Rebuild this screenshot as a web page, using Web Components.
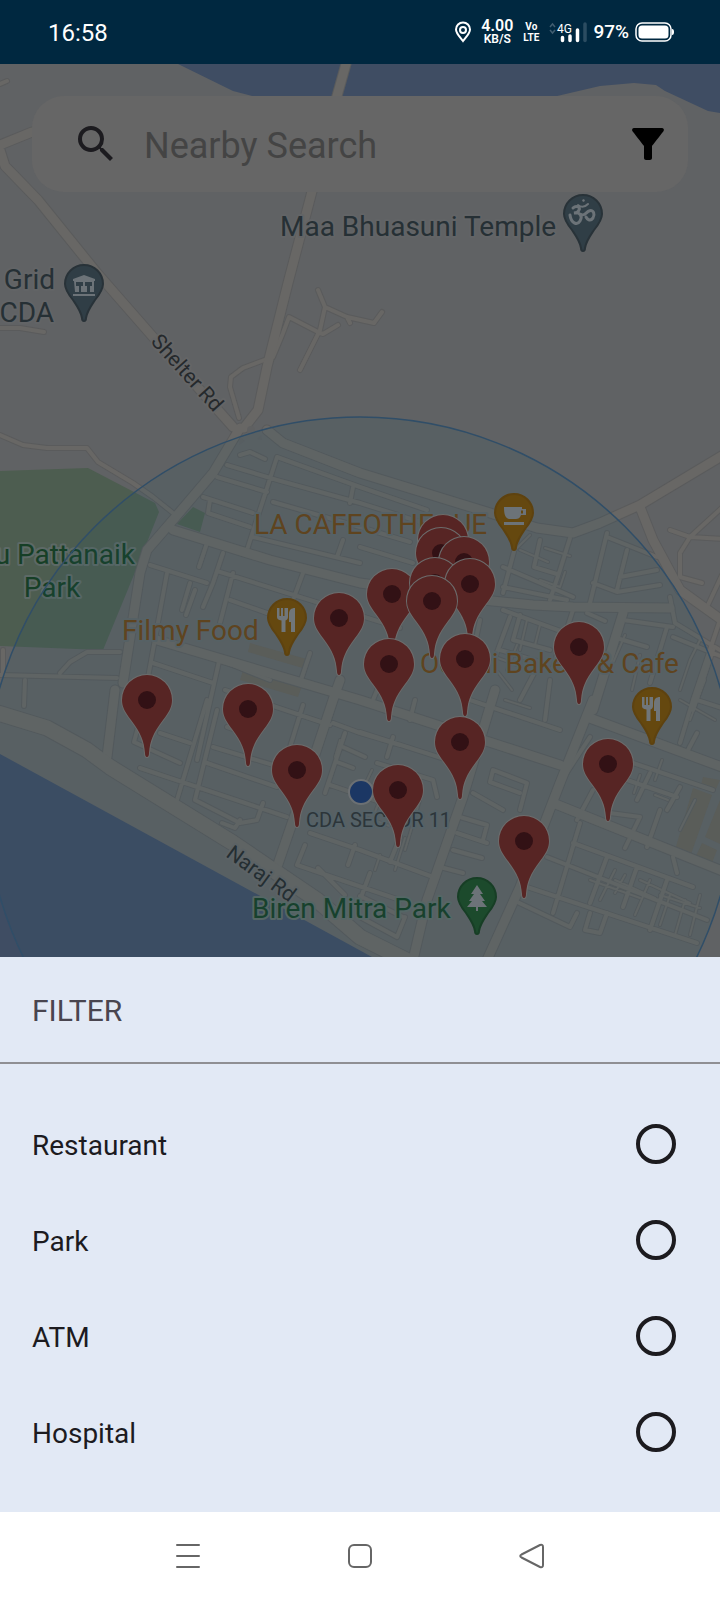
<!DOCTYPE html>
<html lang="en">
<head>
<meta charset="utf-8">
<meta name="viewport" content="width=device-width, initial-scale=1">
<title>Nearby Search</title>
<style>
html, body { margin: 0; height: 100%; }
body { font-family: Roboto, "Noto Sans", sans-serif; background: #fff; }
</style>
</head>
<body>
<nearby-app></nearby-app>

<script>
const define = (name, html, setup) => {
  const template = document.createElement('template');
  template.innerHTML = html;
  customElements.define(name, class extends HTMLElement {
    constructor() {
      super();
      this.attachShadow({ mode: 'open' }).append(template.content.cloneNode(true));
    }
    connectedCallback() { if (setup) setup(this.shadowRoot, this); }
  });
};

define('status-bar', `
<style>
:host { display: flex; align-items: center; justify-content: space-between; box-sizing: border-box; height: 64px; padding: 0 46px 0 48px; background: #002840; color: #fff; }
time { padding-top: 2px; font-size: 24px; line-height: 32px; }
.icons { display: flex; align-items: center; }
.icons svg { display: block; flex: none; }
.stack { display: flex; flex-direction: column; align-items: center; font-weight: 600; }
.rate { margin-left: 9px; font-size: 16px; line-height: 14px; }
.rate small { font-size: 12px; line-height: 12px; }
.volte { margin-left: 10px; font-size: 10px; line-height: 11px; font-weight: 700; }
.signal { margin-left: 9px; }
.signal text { font: 400 12px Roboto, sans-serif; fill: #fff; }
.charge { margin: 0 6px 0 5px; font-size: 19px; line-height: 24px; font-weight: 500; }
</style>
<time>16:58</time>
<div class="icons">
  <svg width="18" height="22" viewBox="0 0 18 22" fill="none" stroke="#fff" stroke-width="2"><path d="M9 20C6 16 2 12.500 2 8.500A7 7 0 0 1 16 8.500C16 12.500 12 16 9 20Z"/><circle cx="9" cy="9" r="3"/></svg>
  <div class="stack rate"><span>4.00</span><small>KB/S</small></div>
  <div class="stack volte"><span>Vo</span><span>LTE</span></div>
  <svg class="signal" width="40" height="22" viewBox="0 0 40 22"><path d="M2 6l2.500-3 2.500 3M2 9l2.500 3 2.500-3" fill="none" stroke="#405d70" stroke-width="1.500"/><text x="9" y="12">4G</text><path d="M14.500 16.500v3M22 15v4.500M29.500 9v10.500" stroke="#fff" stroke-width="3.500" stroke-linecap="round"/><path d="M37 3v16.500" stroke="#2b4c61" stroke-width="3.500" stroke-linecap="round"/></svg>
  <span class="charge">97%</span>
  <svg width="39" height="22" viewBox="0 0 39 22"><rect x="1" y="2" width="35" height="18" rx="6" fill="none" stroke="#fff" stroke-width="1.500"/><rect x="3.500" y="4.500" width="30" height="13" rx="3.500" fill="#fff"/><path d="M37 8c1.500 0 2 1 2 3s-.5 3-2 3z" fill="#fff"/></svg>
</div>`);

define('search-bar', `
<style>
:host { display: flex; align-items: center; box-sizing: border-box; height: 96px; padding: 0 16px 0 40px; background: #666; border-radius: 32px; }
svg { display: block; }
input { flex: 1; min-width: 0; margin: 0 0 0 24px; padding: 4px 0 0; border: 0; outline: 0; background: none; color: #222; font: 36px/44px Roboto, sans-serif; }
input::placeholder { color: #444; opacity: 1; }
button { padding: 0; border: 0; background: none; }
</style>
<svg width="48" height="48" viewBox="0 0 24 24" fill="#1c1b1f" aria-hidden="true"><path d="M15.500 14h-.79l-.28-.27A6.471 6.471 0 0 0 16 9.500 6.500 6.500 0 1 0 9.500 16c1.610 0 3.090-.59 4.230-1.570l.27.28v.79l5 4.990L20.490 19l-4.990-5zm-6 0C7.010 14 5 11.990 5 9.500S7.010 5 9.500 5 14 7.010 14 9.500 11.990 14 9.500 14z"/></svg>
<input type="search" placeholder="Nearby Search" aria-label="Nearby Search">
<button type="button" aria-label="Filter"><svg width="48" height="48" viewBox="0 0 24 24"><path d="M4.250 5.610C6.270 8.200 10 13 10 13v6c0 .55.45 1 1 1h2c.55 0 1-.45 1-1v-6s3.720-4.800 5.740-7.390A.998.998 0 0 0 18.950 4H5.040c-.83 0-1.300.95-.79 1.610z"/></svg></button>`);

define('area-map', `
<style>
:host { display: block; position: relative; overflow: hidden; background: #606264; }
.canvas { position: absolute; inset: 0; width: 100%; height: 100%; display: block; }
text { font-family: Roboto, "Noto Sans", sans-serif; font-size: 28px; paint-order: stroke; stroke-linejoin: round; stroke-width: 4px; }
.place { fill: #263035; stroke: #626466; }
.food { fill: #684216; stroke: #5e6466; }
.park { fill: #163f26; stroke: #5d6966; }
.road { fill: #25292c; stroke: #646566; font-size: 21px; }
.area { fill: #2e3235; stroke: #5c6468; font-size: 20px; }
.casing, .surface { fill: none; stroke-linejoin: round; stroke-linecap: round; }
.casing { stroke: #5a5b5c; }
.surface { stroke: #686765; }
</style>
<svg class="canvas" viewBox="0 64 720 893" preserveAspectRatio="xMidYMin slice" role="img" aria-label="Map of nearby places">
  <defs>
    <g id="pin"><path d="M0 82C-1.500 82-2 80-2 78C-3 66-6 58-16 45C-22 37-25 32-25 25A25 25 0 0 1 25 25C25 32 22 37 16 45C6 58 3 66 2 78C2 80 1.500 82 0 82Z" fill="#572524" stroke="#6c6c6c" stroke-width="2" paint-order="stroke"/><circle cy="25" r="9" fill="#321115"/></g>
    <path id="poi" d="M0 57C-1.500 57-2 55-2 54C-3 47-7 42-11 36C-15 31-19 26-19 20A19 19 0 0 1 19 20C19 26 15 31 11 36C7 42 3 47 2 54C2 55 1.500 57 0 57Z" stroke-width="2"/>
    <g id="cutlery" fill="#70767a"><path d="M-10 10h2.500v8h1.500v-8h2v8h1.500v-8H1v9c0 2-1 3-2.500 3.500V34h-4V22.500C-9 22-10 21-10 19Z"/><path d="M8 10V34H4V24H2V16C2 12 4 10 8 10Z"/></g>
    <path id="avenue" d="M-10 142L0 150M0 145L32 132M0 150L5 166L38 200L97 273L153 337L233 427M346 64L337 96L288 283L267 367L258 410L244 428M240 428L213 473L173 520L147 550L140 573L123 683M267 430L283 443L360 473L487 512L537 528L573 533L600 523L640 505L730 451M640 507L653 540L680 590L730 626M173 530L270 560L360 583L483 600L533 605L573 607L670 608M157 640L360 700L560 765M593 700L560 783L520 887L487 960M623 613L593 710M587 717L730 770M553 803L730 874M495 690L463 797L427 900L413 960M340 680L333 700L300 800L277 867M115 690L107 757"/>
    <path id="riverside" d="M-5 712L47 728L87 750L110 767L233 843L317 900L360 937L410 962"/>
    <path id="lane" d="M0 84L7 81M267 359L243 368L231 377L230 387L239 418M273 357L283 333L289 317L320 333L323 334L338 325M318 290L325 307L320 330L300 370M325 307L347 317L374 323L382 312M347 317L350 323M0 328L20 328L44 332M0 435L23 445L47 448L87 448L98 462L133 483L153 497L173 513M277 457L360 487L427 510M277 457L247 550M217 477L267 492M203 497L253 513M227 465L277 480L360 503L430 525M273 502L360 527L410 542M253 537L360 563M210 500L208 513L250 527M207 543L199 567M223 553L213 583L203 607M150 565L207 583M167 573L147 683M190 583L182 610M217 571L300 597L400 628M233 573L220 623M303 573L293 600M230 600L267 613M353 487L350 503M343 540L337 557M153 663L213 683M220 657L197 760M220 660L270 680M310 653L300 683M195 590L186 615M240 455L250 452L265 459M60 673L70 662L87 652L120 652M0 675L117 678M25 680L24 706M3 650V675M670 530L690 537L725 539M725 505L690 537L680 553V577L702 583M722 575L707 607M503 567L573 597M360 547L413 563M503 587L567 600M517 540L503 593M540 540L534 567L557 574M570 538L560 570L550 600M607 533L590 603M607 537L657 557M627 550L617 590M593 583L617 592L660 585M620 577L657 570M503 610L577 637M573 610L560 650M587 613L605 621M623 620L673 627M613 637L647 647M510 617L493 663M667 627L650 683M673 637L730 660M713 650L693 710M670 597L675 623L720 650M393 737L387 757M360 732L457 763M377 763L433 780L437 797M520 810L527 783L493 770L490 782L520 793M473 793L503 810M460 817L487 825L483 840M457 833L487 843M453 850L482 858M360 850L433 877M370 873L360 900M360 896L403 917M360 917L397 937L405 917M440 867L463 873M573 843L693 887M547 857L707 920M527 887L697 943M513 900L570 927L577 913M580 823L553 913M607 857L590 903M637 867L623 907M667 880L650 930M590 913L585 930L600 933L607 913M633 763L713 790M650 773L637 800M680 787L667 810M627 780L677 797M610 813L640 817L625 848M660 810L647 847M673 857L677 873M680 743L693 700L720 620M697 700L725 709M697 733L688 750M590 737L560 783M593 790L577 820M207 700L177 800M160 733L190 743M140 720L134 742L180 763M140 768L287 817M217 710L195 800L240 823L257 820L263 803M222 823L235 828L240 820M207 763L277 787M213 747L280 767M227 727L250 735M303 705L290 747M225 690L330 725M333 723L360 733L400 745M345 733L325 793M343 747L365 757M337 762L353 768M330 785L380 802M310 833L360 850M305 845L297 865L400 900M318 868L345 895M355 845L348 865M400 837L390 862M415 700L410 720M380 683L373 700M480 620L465 690M500 650L540 662L520 700M520 615L513 640L550 650M550 680L545 720M470 700L560 730"/>
    <path id="alley" d="M513 552L530 535M520 550L548 562M545 548L570 556M540 580L560 587L565 572M517 645L507 670M495 657L520 666M527 620L520 650M540 625L535 645M498 672L512 690M505 700L530 708M560 640L552 668M625 635L613 663M640 655L632 690M690 660L680 690M660 650L655 672M705 680L690 720M340 740L335 757M372 770L360 795M388 780L375 812M400 785L393 815M360 815L395 828M405 838L395 870M420 800L405 850M380 855L375 870M615 870L600 900M625 875L615 893M650 880L635 915M670 895L660 925M685 900L675 935M590 880L640 898M615 880L655 898M640 880L690 903M660 895L700 908M700 895L690 935M640 775L634 793M662 760L655 780M655 795L668 800M695 800L680 830M700 640L690 660M680 700L715 720"/>
  </defs>
  <path fill="#3f4d63" d="M178 64L233 91L275 102L540 100L600 86L634 83L656 85L665 91L708 111L720 113V64ZM0 754L372 957H0Z"/>
  <path fill="#4d5d50" d="M0 471L88 468L155 503L159 512L140 560L103 650L0 646ZM193 507L205 513L200 532L177 524Z"/>
  <path fill="#625f58" d="M250 643L310 660L306 669L248 652ZM245 664L303 683L298 697L240 680ZM693 788L712 795L690 857L675 850ZM703 777L720 780L716 789L701 785ZM720 800V844L705 837ZM702 843L717 850L712 863L695 858Z"/>
  <g class="casing">
    <use href="#alley" stroke-width="4"/><use href="#lane" stroke-width="6"/><use href="#avenue" stroke-width="11"/><use href="#riverside" stroke-width="17"/>
  </g>
  <g class="surface">
    <use href="#alley" stroke-width="2"/><use href="#lane" stroke-width="4"/><use href="#avenue" stroke-width="9"/><use href="#riverside" stroke-width="15"/>
  </g>
  <g fill="#5f6061"><circle cx="251" cy="430" r="4"/><path d="M257 439l5 1l-1-5zM240 437l5 4l-6 4z"/></g>

  <text class="place" x="280" y="236">Maa Bhuasuni Temple</text>
  <text class="place" x="55" y="289" text-anchor="end">Grid</text>
  <text class="place" x="54" y="322" text-anchor="end">CDA</text>
  <text class="road" transform="translate(150 342) rotate(48)">Shelter Rd</text>
  <text class="road" transform="translate(225 856) rotate(36)">Naraj Rd</text>
  <text class="park" x="135" y="564" text-anchor="end">u Pattanaik</text>
  <text class="park" x="52" y="597" text-anchor="middle">Park</text>
  <text class="food" x="254" y="534">LA CAFEOTHEQUE</text>
  <text class="food" x="122" y="640">Filmy Food</text>
  <text class="food" x="420" y="673">Odishi Bakery &amp; Cafe</text>
  <text class="area" x="306" y="827">CDA SECTOR 11</text>
  <text class="park" x="252" y="918">Biren Mitra Park</text>
  <circle cx="360" cy="792" r="375" fill="#1e5564" fill-opacity=".12" stroke="#304e68" stroke-width="1.500"/>

  <g fill="#303e46" stroke="#283238">
    <use href="#poi" x="84" y="264"/><use href="#poi" x="583" y="194"/>
  </g>
  <g fill="#65480f" stroke="#5e420f">
    <use href="#poi" x="514" y="493"/><use href="#poi" x="287" y="598"/><use href="#poi" x="652" y="687"/>
  </g>
  <use href="#poi" x="477" y="877" fill="#1c4a2c" stroke="#173e25"/>
  <g fill="#6c7378">
    <path d="M73 281V279L84 275L95 279V281ZM74 281H94V292H90V286H92V282H85V286H87V292H81V286H83V282H76V286H79V292H75ZM73 294H95V296H73Z"/>
    <path d="M504 507H522V509H526V515H521C520 518 518 519 516 519H509C505 518 504 514 504 507ZM523 510.500H521V513.500H523ZM504 522H524V525H504Z" fill-rule="evenodd"/>
    <path d="M477 885L483 894H480L485 901H482L487 907H478V911H476V907H467L472 901H469L474 894H471Z"/>
  </g>
  <g fill="none" stroke="#6c7378" stroke-width="3" stroke-linecap="round"><path d="M573 208C576 205 581 207 579 210C578 213 575 213 574 213C580 212 583 216 580 221C577 226 571 223 570 215M580 214C585 217 586 212 589 211C594 209 595 215 593 218C590 222 587 219 586 217"/><path d="M578 205Q583 209 588 204" stroke-width="2"/></g><path d="M583 202l2-1l-1-2l-2 1z" fill="#6c7378"/>
  <use href="#cutlery" x="287" y="598"/><use href="#cutlery" x="652" y="687"/>

  <circle cx="361" cy="792" r="12" fill="#1b3764" stroke="#6c7073" stroke-width="2"/>
  <g>
    <use href="#pin" x="443" y="515"/><use href="#pin" x="441" y="528"/><use href="#pin" x="464" y="537"/>
    <use href="#pin" x="392" y="569"/><use href="#pin" x="435" y="558"/><use href="#pin" x="470" y="559"/>
    <use href="#pin" x="432" y="576"/><use href="#pin" x="339" y="593"/><use href="#pin" x="579" y="622"/>
    <use href="#pin" x="465" y="634"/><use href="#pin" x="389" y="639"/><use href="#pin" x="147" y="675"/>
    <use href="#pin" x="248" y="684"/><use href="#pin" x="460" y="717"/><use href="#pin" x="608" y="739"/>
    <use href="#pin" x="297" y="745"/><use href="#pin" x="398" y="765"/><use href="#pin" x="524" y="816"/>
  </g>
</svg>
<slot></slot>`);

define('filter-option', `
<style>
:host { display: block; }
label { display: flex; align-items: center; justify-content: space-between; height: 96px; padding: 0 44px 0 32px; color: #1c1b1f; font-size: 28px; line-height: 40px; }
span { padding-top: 4px; }
input { appearance: none; box-sizing: border-box; width: 40px; height: 40px; margin: 0; border: 4px solid #1c1b1f; border-radius: 50%; }
input:checked { background: radial-gradient(#1c1b1f 45%, transparent 50%); }
</style>
<label><span><slot></slot></span><input type="radio" name="kind"></label>`, (root, host) => {
  root.querySelector('input').value = host.textContent;
});

define('filter-sheet', `
<style>
:host { display: block; background: #e2e9f5; }
h2 { margin: 0; padding: 34px 32px 31px; border-bottom: 2px solid #8f8f93; color: #49454f; font-size: 30px; line-height: 40px; font-weight: 400; }
.options { padding: 32px 0; }
</style>
<h2>FILTER</h2>
<div class="options" role="radiogroup" aria-label="Filter"><slot></slot></div>`);

define('nav-bar', `
<style>
:host { display: flex; justify-content: center; align-items: center; gap: 124px; height: 88px; background: #fff; }
button { display: block; padding: 0; border: 0; background: none; }
svg { display: block; width: 48px; height: 48px; fill: none; stroke: #666; stroke-width: 2; stroke-linecap: round; stroke-linejoin: round; }
</style>
<button type="button" aria-label="Recent apps"><svg viewBox="0 0 48 48"><path d="M13 13H35M13 24H35M13 35H35"/></svg></button>
<button type="button" aria-label="Home"><svg viewBox="0 0 48 48"><rect x="13" y="13" width="22" height="22" rx="5"/></svg></button>
<button type="button" aria-label="Back"><svg viewBox="0 0 48 48"><path d="M13.500 22.500L32 13Q35 12 35 15V33Q35 36 32 35L13.500 25.500Q11 24 13.500 22.500Z"/></svg></button>`);

define('nearby-app', `
<style>
:host { display: flex; flex-direction: column; min-height: 100vh; }
area-map { flex: 1; min-height: 400px; }
search-bar { position: relative; margin: 32px 32px 0; }
</style>
<status-bar></status-bar>
<area-map><search-bar></search-bar></area-map>
<filter-sheet>
  <filter-option>Restaurant</filter-option>
  <filter-option>Park</filter-option>
  <filter-option>ATM</filter-option>
  <filter-option>Hospital</filter-option>
</filter-sheet>
<nav-bar></nav-bar>`);
</script>
</body>
</html>
